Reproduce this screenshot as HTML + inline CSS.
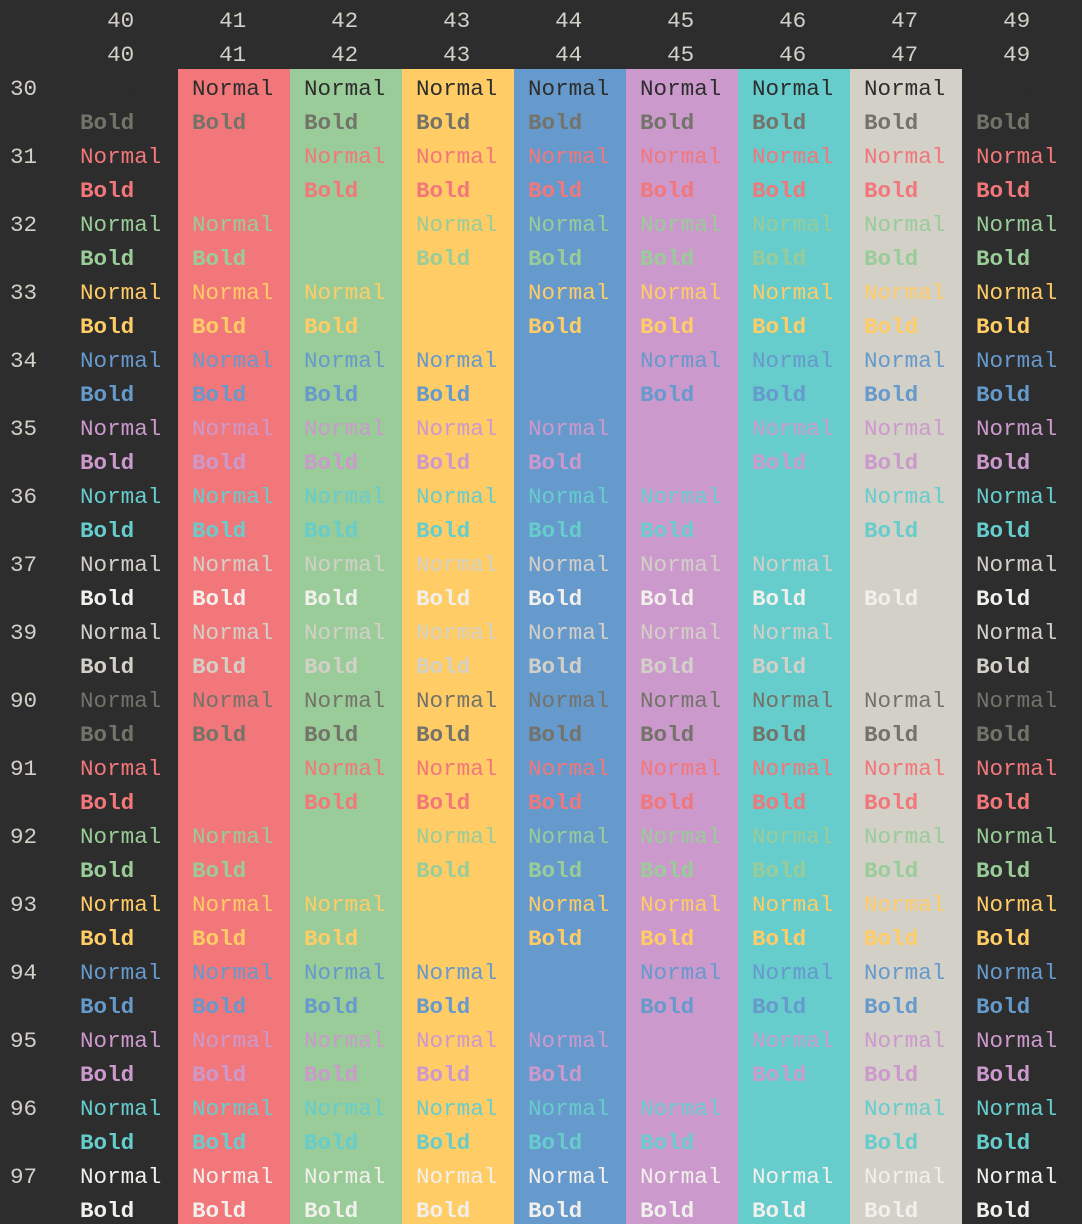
<!DOCTYPE html>
<html><head><meta charset="utf-8"><style>
html,body{margin:0;padding:0;background:#2d2d2d;width:1082px;height:1224px;overflow:hidden;position:relative;font-family:"Liberation Mono",monospace;font-size:22.6px;}
.bg{position:absolute;top:69px;height:1156px;}
.wrap{position:absolute;left:0;top:4px;width:1082px;}
.l{position:relative;height:34px;line-height:34px;white-space:pre;display:flex;}
.l span{display:block;width:112px;padding-left:14px;box-sizing:border-box;}
.l span:first-child{width:66px;padding-left:10px;color:#d3d0c8;font-weight:normal;}
.l span:last-child{width:120px;}
.b span{font-weight:bold;}
.h{color:#d3d0c8;}
</style></head><body>
<div class="bg" style="left:178px;width:112px;background:#f2777a"></div>
<div class="bg" style="left:290px;width:112px;background:#99cc99"></div>
<div class="bg" style="left:402px;width:112px;background:#ffcc66"></div>
<div class="bg" style="left:514px;width:112px;background:#6699cc"></div>
<div class="bg" style="left:626px;width:112px;background:#cc99cc"></div>
<div class="bg" style="left:738px;width:112px;background:#66cccc"></div>
<div class="bg" style="left:850px;width:112px;background:#d3d0c8"></div>
<div class="wrap">
<div class="l h"><span></span><span>  40</span><span>  41</span><span>  42</span><span>  43</span><span>  44</span><span>  45</span><span>  46</span><span>  47</span><span>  49</span></div>
<div class="l h"><span></span><span>  40</span><span>  41</span><span>  42</span><span>  43</span><span>  44</span><span>  45</span><span>  46</span><span>  47</span><span>  49</span></div>
<div class="l" style="color:#2d2d2d"><span>30</span><span>Normal</span><span>Normal</span><span>Normal</span><span>Normal</span><span>Normal</span><span>Normal</span><span>Normal</span><span>Normal</span><span>Normal</span></div>
<div class="l b" style="color:#747369"><span></span><span>Bold</span><span>Bold</span><span>Bold</span><span>Bold</span><span>Bold</span><span>Bold</span><span>Bold</span><span>Bold</span><span>Bold</span></div>
<div class="l" style="color:#f2777a"><span>31</span><span>Normal</span><span>Normal</span><span>Normal</span><span>Normal</span><span>Normal</span><span>Normal</span><span>Normal</span><span>Normal</span><span>Normal</span></div>
<div class="l b" style="color:#f2777a"><span></span><span>Bold</span><span>Bold</span><span>Bold</span><span>Bold</span><span>Bold</span><span>Bold</span><span>Bold</span><span>Bold</span><span>Bold</span></div>
<div class="l" style="color:#99cc99"><span>32</span><span>Normal</span><span>Normal</span><span>Normal</span><span>Normal</span><span>Normal</span><span>Normal</span><span>Normal</span><span>Normal</span><span>Normal</span></div>
<div class="l b" style="color:#99cc99"><span></span><span>Bold</span><span>Bold</span><span>Bold</span><span>Bold</span><span>Bold</span><span>Bold</span><span>Bold</span><span>Bold</span><span>Bold</span></div>
<div class="l" style="color:#ffcc66"><span>33</span><span>Normal</span><span>Normal</span><span>Normal</span><span>Normal</span><span>Normal</span><span>Normal</span><span>Normal</span><span>Normal</span><span>Normal</span></div>
<div class="l b" style="color:#ffcc66"><span></span><span>Bold</span><span>Bold</span><span>Bold</span><span>Bold</span><span>Bold</span><span>Bold</span><span>Bold</span><span>Bold</span><span>Bold</span></div>
<div class="l" style="color:#6699cc"><span>34</span><span>Normal</span><span>Normal</span><span>Normal</span><span>Normal</span><span>Normal</span><span>Normal</span><span>Normal</span><span>Normal</span><span>Normal</span></div>
<div class="l b" style="color:#6699cc"><span></span><span>Bold</span><span>Bold</span><span>Bold</span><span>Bold</span><span>Bold</span><span>Bold</span><span>Bold</span><span>Bold</span><span>Bold</span></div>
<div class="l" style="color:#cc99cc"><span>35</span><span>Normal</span><span>Normal</span><span>Normal</span><span>Normal</span><span>Normal</span><span>Normal</span><span>Normal</span><span>Normal</span><span>Normal</span></div>
<div class="l b" style="color:#cc99cc"><span></span><span>Bold</span><span>Bold</span><span>Bold</span><span>Bold</span><span>Bold</span><span>Bold</span><span>Bold</span><span>Bold</span><span>Bold</span></div>
<div class="l" style="color:#66cccc"><span>36</span><span>Normal</span><span>Normal</span><span>Normal</span><span>Normal</span><span>Normal</span><span>Normal</span><span>Normal</span><span>Normal</span><span>Normal</span></div>
<div class="l b" style="color:#66cccc"><span></span><span>Bold</span><span>Bold</span><span>Bold</span><span>Bold</span><span>Bold</span><span>Bold</span><span>Bold</span><span>Bold</span><span>Bold</span></div>
<div class="l" style="color:#d3d0c8"><span>37</span><span>Normal</span><span>Normal</span><span>Normal</span><span>Normal</span><span>Normal</span><span>Normal</span><span>Normal</span><span>Normal</span><span>Normal</span></div>
<div class="l b" style="color:#f2f0ec"><span></span><span>Bold</span><span>Bold</span><span>Bold</span><span>Bold</span><span>Bold</span><span>Bold</span><span>Bold</span><span>Bold</span><span>Bold</span></div>
<div class="l" style="color:#d3d0c8"><span>39</span><span>Normal</span><span>Normal</span><span>Normal</span><span>Normal</span><span>Normal</span><span>Normal</span><span>Normal</span><span>Normal</span><span>Normal</span></div>
<div class="l b" style="color:#d3d0c8"><span></span><span>Bold</span><span>Bold</span><span>Bold</span><span>Bold</span><span>Bold</span><span>Bold</span><span>Bold</span><span>Bold</span><span>Bold</span></div>
<div class="l" style="color:#747369"><span>90</span><span>Normal</span><span>Normal</span><span>Normal</span><span>Normal</span><span>Normal</span><span>Normal</span><span>Normal</span><span>Normal</span><span>Normal</span></div>
<div class="l b" style="color:#747369"><span></span><span>Bold</span><span>Bold</span><span>Bold</span><span>Bold</span><span>Bold</span><span>Bold</span><span>Bold</span><span>Bold</span><span>Bold</span></div>
<div class="l" style="color:#f2777a"><span>91</span><span>Normal</span><span>Normal</span><span>Normal</span><span>Normal</span><span>Normal</span><span>Normal</span><span>Normal</span><span>Normal</span><span>Normal</span></div>
<div class="l b" style="color:#f2777a"><span></span><span>Bold</span><span>Bold</span><span>Bold</span><span>Bold</span><span>Bold</span><span>Bold</span><span>Bold</span><span>Bold</span><span>Bold</span></div>
<div class="l" style="color:#99cc99"><span>92</span><span>Normal</span><span>Normal</span><span>Normal</span><span>Normal</span><span>Normal</span><span>Normal</span><span>Normal</span><span>Normal</span><span>Normal</span></div>
<div class="l b" style="color:#99cc99"><span></span><span>Bold</span><span>Bold</span><span>Bold</span><span>Bold</span><span>Bold</span><span>Bold</span><span>Bold</span><span>Bold</span><span>Bold</span></div>
<div class="l" style="color:#ffcc66"><span>93</span><span>Normal</span><span>Normal</span><span>Normal</span><span>Normal</span><span>Normal</span><span>Normal</span><span>Normal</span><span>Normal</span><span>Normal</span></div>
<div class="l b" style="color:#ffcc66"><span></span><span>Bold</span><span>Bold</span><span>Bold</span><span>Bold</span><span>Bold</span><span>Bold</span><span>Bold</span><span>Bold</span><span>Bold</span></div>
<div class="l" style="color:#6699cc"><span>94</span><span>Normal</span><span>Normal</span><span>Normal</span><span>Normal</span><span>Normal</span><span>Normal</span><span>Normal</span><span>Normal</span><span>Normal</span></div>
<div class="l b" style="color:#6699cc"><span></span><span>Bold</span><span>Bold</span><span>Bold</span><span>Bold</span><span>Bold</span><span>Bold</span><span>Bold</span><span>Bold</span><span>Bold</span></div>
<div class="l" style="color:#cc99cc"><span>95</span><span>Normal</span><span>Normal</span><span>Normal</span><span>Normal</span><span>Normal</span><span>Normal</span><span>Normal</span><span>Normal</span><span>Normal</span></div>
<div class="l b" style="color:#cc99cc"><span></span><span>Bold</span><span>Bold</span><span>Bold</span><span>Bold</span><span>Bold</span><span>Bold</span><span>Bold</span><span>Bold</span><span>Bold</span></div>
<div class="l" style="color:#66cccc"><span>96</span><span>Normal</span><span>Normal</span><span>Normal</span><span>Normal</span><span>Normal</span><span>Normal</span><span>Normal</span><span>Normal</span><span>Normal</span></div>
<div class="l b" style="color:#66cccc"><span></span><span>Bold</span><span>Bold</span><span>Bold</span><span>Bold</span><span>Bold</span><span>Bold</span><span>Bold</span><span>Bold</span><span>Bold</span></div>
<div class="l" style="color:#f2f0ec"><span>97</span><span>Normal</span><span>Normal</span><span>Normal</span><span>Normal</span><span>Normal</span><span>Normal</span><span>Normal</span><span>Normal</span><span>Normal</span></div>
<div class="l b" style="color:#f2f0ec"><span></span><span>Bold</span><span>Bold</span><span>Bold</span><span>Bold</span><span>Bold</span><span>Bold</span><span>Bold</span><span>Bold</span><span>Bold</span></div>
</div>
</body></html>
